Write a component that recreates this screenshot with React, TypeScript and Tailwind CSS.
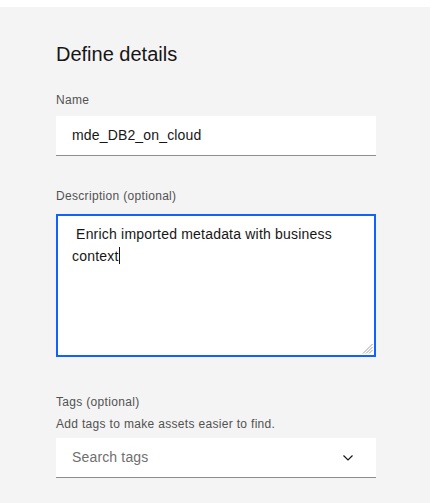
export default function App() {
  return (
    <div
      className="h-[503px] w-[435px] bg-white pt-[7px] pr-[5px] text-[#161616]"
      style={{ fontFamily: '"Liberation Sans", Arial, sans-serif' }}
    >
      <div className="h-full bg-[#f4f4f4] pl-[56px] pt-[33px]">
        <h2 className="text-[20px] leading-[28px] font-normal">Define details</h2>

        {/* Name */}
        <label className="mt-[24px] mb-[8px] block text-[12px] leading-[16px] tracking-[0.32px] text-[#525252]">
          Name
        </label>
        <div className="flex h-[40px] w-[320px] items-center border-b border-[#8d8d8d] bg-white px-4 text-[14px] tracking-[0.16px]">
          mde_DB2_on_cloud
        </div>

        {/* Description */}
        <label className="mt-[32px] mb-[10px] block text-[12px] leading-[16px] tracking-[0.32px] text-[#525252]">
          Description (optional)
        </label>
        <div className="relative h-[143px] w-[320px] border-2 border-[#0f62fe] bg-white px-[14px] pt-[8px] text-[14px] leading-[20px] tracking-[0.2px] whitespace-pre-wrap">
          {' Enrich imported metadata with business context'}
          <span className="inline-block h-[17px] w-px translate-y-[3px] bg-[#161616]" />
          <svg className="absolute right-[1px] bottom-[1px]" width="11" height="11" viewBox="0 0 11 11">
            <g stroke="#a0a0a0" strokeWidth="1">
              <line x1="10.5" y1="1" x2="1" y2="10.5" />
              <line x1="10.5" y1="4" x2="4" y2="10.5" />
              <line x1="10.5" y1="7" x2="7" y2="10.5" />
            </g>
          </svg>
        </div>

        {/* Tags */}
        <label className="mt-[37px] block text-[12px] leading-[16px] tracking-[0.32px] text-[#525252]">
          Tags (optional)
        </label>
        <p className="mt-[6px] mb-[6px] text-[12px] leading-[16px] tracking-[0.32px] text-[#525252]">
          Add tags to make assets easier to find.
        </p>
        <div className="flex h-[40px] w-[320px] items-center justify-between border-b border-[#8d8d8d] bg-white pr-[23px] pl-4">
          <span className="text-[14px] tracking-[0.16px] text-[#6f6f6f]">Search tags</span>
          <svg width="10" height="6" viewBox="0 0 10 6" fill="none">
            <path d="M0.5 0.5 L5 5 L9.5 0.5" stroke="#161616" strokeWidth="1.2" />
          </svg>
        </div>
      </div>
    </div>
  );
}
